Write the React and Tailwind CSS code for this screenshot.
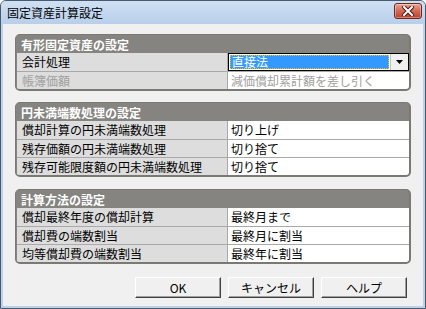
import React from 'react';

const font = { fontFamily: '"Noto Sans CJK JP", "Liberation Sans", sans-serif' };

const Row = ({ label, value, disabled, first }) => (
  <div className={`flex h-[18px] ${first ? '' : 'border-t border-[#a9a9a9]'}`}>
    <div className={`flex w-[210px] items-center bg-[#dddddd] pl-[5px] text-[12px] leading-none ${disabled ? 'text-[#a0a0a0]' : 'text-black'}`}>
      {label}
    </div>
    <div className={`flex flex-1 items-center border-l border-[#a9a9a9] bg-white pl-[3px] text-[12px] leading-none ${disabled ? 'text-[#a0a0a0]' : 'text-black'}`}>
      {value}
    </div>
  </div>
);

const Group = ({ title, children, className }) => (
  <div className={`overflow-hidden rounded-[5px] border border-[#7a7974] border-b-2 border-r-2 bg-[#858480] ${className}`}>
    <div className="flex h-[18px] items-center pl-[5px] pt-[1px] text-[12px] font-bold leading-none text-white">{title}</div>
    <div className="border-l border-[#858480] bg-[#858480]">{children}</div>
  </div>
);

const Button = ({ children }) => (
  <button className="flex h-[21px] w-[86px] items-center justify-center border border-t-white border-l-white border-b-[#404040] border-r-[#404040] bg-[#f0f0f0] text-[12px] leading-none text-black shadow-[inset_-1px_-1px_0_#a0a0a0]">
    {children}
  </button>
);

export default function App() {
  return (
    <div style={font} className="h-[309px] w-[426px] overflow-hidden rounded-t-[6px] border border-[#4a5a6e] bg-[#bcd2ec]">
      {/* title bar */}
      <div className="flex h-[23px] items-center justify-between bg-gradient-to-b from-[#cfe0f3] to-[#b8cfea] pl-[6px] pr-[3px]">
        <span className="text-[12px] leading-none text-black">固定資産計算設定</span>
        <div className="mt-[-3px] flex h-[16px] w-[28px] items-center justify-center rounded-[3px] border border-[#6b2a20] bg-gradient-to-b from-[#e7a595] via-[#cf6a55] to-[#b8402c] shadow-[inset_0_0_0_1px_rgba(255,255,255,0.35)]">
          <svg width="12" height="10" viewBox="0 0 12 10">
            <path d="M2 1 L10 9 M10 1 L2 9" stroke="#4a1a12" strokeWidth="4" strokeLinecap="square" />
            <path d="M2 1 L10 9 M10 1 L2 9" stroke="#ffffff" strokeWidth="2" strokeLinecap="square" />
          </svg>
        </div>
      </div>

      {/* body */}
      <div className="mx-[2px] flex h-[282px] flex-col bg-[#f0f0f0] px-[12px] pt-[10px]">
        <Group title="有形固定資産の設定">
          <div className="flex h-[18px]">
            <div className="flex w-[210px] items-center bg-[#dddddd] pl-[5px] text-[12px] leading-none text-black">会計処理</div>
            <div className="flex flex-1 border-l border-[#a9a9a9] bg-white">
              <div className="flex flex-1 border border-black">
                <div className="m-[1px] flex flex-1 items-center bg-[#3399ff] pl-[2px] text-[12px] leading-none text-white outline-1 outline-dotted outline-offset-[-1px] outline-[#f0c000]">
                  直接法
                </div>
                <div className="flex w-[18px] items-center justify-center border-l border-[#c0c0c0] bg-[#f0f0f0]">
                  <svg width="7" height="4" viewBox="0 0 7 4">
                    <path d="M0 0 H7 L3.5 4 Z" fill="#000" />
                  </svg>
                </div>
              </div>
            </div>
          </div>
          <Row label="帳簿価額" value="減価償却累計額を差し引く" disabled />
        </Group>

        <Group title="円未満端数処理の設定" className="mt-[11px]">
          <Row first label="償却計算の円未満端数処理" value="切り上げ" />
          <Row label="残存価額の円未満端数処理" value="切り捨て" />
          <Row label="残存可能限度額の円未満端数処理" value="切り捨て" />
        </Group>

        <Group title="計算方法の設定" className="mt-[12px]">
          <Row first label="償却最終年度の償却計算" value="最終月まで" />
          <Row label="償却費の端数割当" value="最終月に割当" />
          <Row label="均等償却費の端数割当" value="最終年に割当" />
        </Group>

        <div className="mt-[13px] flex justify-end gap-[7px] pr-[4px]">
          <Button>OK</Button>
          <Button>キャンセル</Button>
          <Button>ヘルプ</Button>
        </div>
      </div>
    </div>
  );
}
